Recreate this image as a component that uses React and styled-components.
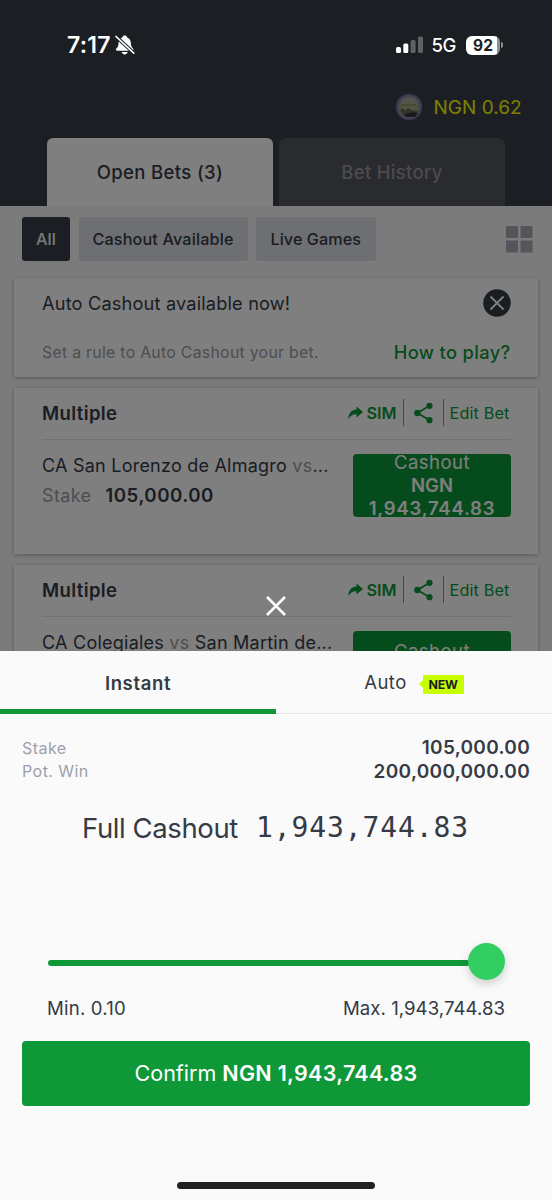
import React from "react";
import styled, { createGlobalStyle } from "styled-components";

const GlobalStyle = createGlobalStyle`
  *, *::before, *::after { box-sizing: border-box; }
  body { margin: 0; background: #7d7d7d; }
  button { font: inherit; border: 0; padding: 0; background: none; color: inherit; letter-spacing: inherit; }
`;

const Screen = styled.div`
  position: relative;
  width: 552px;
  height: 1200px;
  overflow: hidden;
  font-family: Inter, "Liberation Sans", sans-serif;
  color: #353a45;
  background: #f7f7f7;
  white-space: nowrap;
`;

const Header = styled.header`
  height: 206px;
  background: #373c46;
  display: flex;
  flex-direction: column;
  justify-content: flex-end;
`;

const Balance = styled.div`
  height: 28px;
  margin-bottom: 16.5px;
  padding-right: 30.5px;
  display: flex;
  align-items: center;
  justify-content: flex-end;
  gap: 10px;
  color: #ffff00;
  font-size: 19px;
  font-weight: 400;
  letter-spacing: 0px;
`;

const HeaderTabs = styled.nav`
  display: flex;
  gap: 6px;
  padding: 0 47px;
`;

const HeaderTab = styled.button`
  flex: 1;
  height: 68.5px;
  border-radius: 6px 6px 0 0;
  background: ${(p) => (p.$active ? "#fff" : "#54565e")};
  color: ${(p) => (p.$active ? "#353a45" : "#96979c")};
  font-size: 18.5px;
  font-weight: 500;
  letter-spacing: ${(p) => p.$track}px;
`;

const Filters = styled.div`
  display: flex;
  align-items: center;
  gap: 8.5px;
  padding: 11px 19.5px 0 22px;
`;

const Chip = styled.button`
  height: 44px;
  width: ${(p) => p.$width}px;
  border-radius: 3px;
  background: ${(p) => (p.$active ? "#373c46" : "#dddfe5")};
  color: ${(p) => (p.$active ? "#f4f4f4" : "#353a45")};
  font-size: 16.2px;
  font-weight: 500;
  letter-spacing: ${(p) => p.$track}px;
`;

const GridIcon = styled.svg`
  margin-left: auto;
`;

const CardList = styled.main`
  display: flex;
  flex-direction: column;
  gap: 11px;
  padding: 17px 14px 0;
`;

const Card = styled.section`
  height: ${(p) => p.$height}px;
  padding: 0 27px 0 28px;
  background: #fff;
  box-shadow: 0 1px 4px rgba(0, 0, 0, 0.3);
`;

const NoticeRow = styled.div`
  display: flex;
  align-items: center;
  justify-content: space-between;
  height: ${(p) => p.$height}px;
`;

const NoticeTitle = styled.span`
  font-size: 18.2px;
  letter-spacing: 0.17px;
`;

const NoticeHint = styled.span`
  font-size: 15.8px;
  letter-spacing: 0.3px;
  color: #9a9ba3;
`;

const GreenLink = styled.a`
  font-size: 18.3px;
  font-weight: 500;
  color: #0d9737;
  letter-spacing: 0.35px;
  padding-right: 0.5px;
`;

const CardHead = styled.div`
  height: 52px;
  padding-bottom: 2px;
  display: flex;
  align-items: center;
  border-bottom: 1px solid #e2e3e6;
`;

const CardTitle = styled.h2`
  margin: 0 auto 0 0;
  font-size: 18.5px;
  font-weight: 600;
  letter-spacing: 0.4px;
`;

const CardAction = styled.div`
  height: 27px;
  display: flex;
  align-items: center;
  color: #0d9737;
  font-size: 16.3px;
  font-weight: ${(p) => (p.$bold ? 600 : 400)};
  letter-spacing: ${(p) => p.$track || 0}px;
  gap: 3px;
  padding: ${(p) => p.$pad};
  border-left: ${(p) => (p.$divided ? "1.5px solid #8a8c94" : "0")};
`;

const CardBody = styled.div`
  display: flex;
  justify-content: space-between;
  padding-top: 14px;
`;

const BetInfo = styled.div`
  display: flex;
  flex-direction: column;
  font-size: 18px;
  line-height: 30px;
  margin-top: -3px;
  letter-spacing: ${(p) => p.$track}px;
`;

const Muted = styled.span`
  color: #9a9ba3;
`;

const StakeLine = styled.div`
  display: flex;
  gap: 14px;
  letter-spacing: 0.35px;
`;

const Strong = styled.strong`
  font-weight: 600;
  letter-spacing: ${(p) => p.$track || 0}px;
`;

const StakeAmount = styled(Strong)`
  font-size: 18.7px;
`;

const CashoutButton = styled.button`
  width: 158px;
  height: 63px;
  border-radius: 4px;
  overflow: hidden;
  background: #0d9737;
  color: #fff;
  display: flex;
  flex-direction: column;
  align-items: center;
  justify-content: center;
  font-size: 18.5px;
  line-height: 23px;
  letter-spacing: 0.5px;
`;

const Overlay = styled.div`
  position: absolute;
  inset: 0;
  background: rgba(0, 0, 0, 0.5);
`;

const StatusBar = styled.div`
  position: absolute;
  top: 31px;
  left: 0;
  right: 0;
  height: 28px;
  padding: 0 49px 0 67px;
  display: flex;
  align-items: center;
  color: #fff;
`;

const Clock = styled.span`
  font-size: 23px;
  font-weight: 600;
  letter-spacing: 0.2px;
  margin-right: 4.5px;
`;

const Network = styled.span`
  font-size: 18.5px;
  font-weight: 500;
  margin: 0 10px 0 9px;
  letter-spacing: -0.4px;
`;

const SignalIcon = styled.svg`
  margin-left: auto;
`;

const Battery = styled.span`
  width: 34px;
  height: 19px;
  border-radius: 6px;
  background: linear-gradient(90deg, #fff 92%, #8d8f92 92%);
  color: #1b1e23;
  font-size: 15.5px;
  font-weight: 700;
  line-height: 19px;
  text-align: center;
  margin-right: 1px;
`;

const BatteryTip = styled.i`
  width: 2px;
  height: 6px;
  border-radius: 0 2px 2px 0;
  background: #8d8f92;
`;

const CloseIcon = styled.svg`
  position: absolute;
  left: 266px;
  top: 595.5px;
`;

const Sheet = styled.section`
  position: absolute;
  top: 651px;
  left: 0;
  right: 0;
  bottom: 0;
  background: #fafafa;
  display: flex;
  flex-direction: column;
`;

const SheetTabs = styled.div`
  display: flex;
  height: 63px;
`;

const SheetTab = styled.button`
  flex: 1;
  display: flex;
  align-items: center;
  justify-content: center;
  gap: 12px;
  padding-top: ${(p) => (p.$active ? 5 : 0.5)}px;
  border-bottom: ${(p) => (p.$active ? "5.5px solid #0f9838" : "1px solid #e2e4ea")};
  font-size: 18.5px;
  font-weight: ${(p) => (p.$active ? 600 : 400)};
  letter-spacing: ${(p) => (p.$active ? 0.65 : 0.4)}px;
`;

const NewBadge = styled.span`
  display: flex;
  align-items: center;
  margin-top: 4px;
  &::before {
    content: "";
    border: 4px solid transparent;
    border-left: 0;
    border-right-color: #c8ff00;
  }
`;

const BadgeLabel = styled.span`
  width: 41px;
  height: 19px;
  line-height: 19px;
  text-align: center;
  background: #c8ff00;
  color: #1b1e23;
  border-radius: 1px;
  font-size: 12.4px;
  font-weight: 700;
  letter-spacing: -0.2px;
`;

const Summary = styled.dl`
  margin: 22px 22px 0;
`;

const SummaryRow = styled.div`
  display: flex;
  justify-content: space-between;
  align-items: center;
  height: 23.5px;
`;

const SummaryLabel = styled.dt`
  font-size: 16px;
  letter-spacing: 0.45px;
  color: #9ca0ab;
`;

const SummaryValue = styled.dd`
  margin: 0;
  font-size: 19px;
  font-weight: 600;
  letter-spacing: 0.3px;
`;

const Total = styled.div`
  margin-top: 24.5px;
  height: 40px;
  padding-left: 82px;
  display: flex;
  align-items: center;
  gap: 18px;
  font-size: 27.5px;
  letter-spacing: -0.4px;
`;

const MonoAmount = styled.span`
  font-family: "DejaVu Sans Mono", "Liberation Mono", monospace;
  font-size: 28px;
  letter-spacing: 0.9px;
`;

const Slider = styled.div`
  margin: 95.5px 47px 0 48px;
  height: 37px;
  display: flex;
  align-items: center;
`;

const Track = styled.div`
  flex: 1;
  height: 5.5px;
  margin: 3px -2px 0 0;
  border-radius: 3px;
  background: #0f9838;
`;

const Thumb = styled.div`
  width: 37px;
  height: 37px;
  border-radius: 50%;
  background: #32ce61;
  box-shadow: 0 4px 10px rgba(0, 0, 0, 0.18);
`;

const Range = styled.div`
  margin: 14.5px 47px 0;
  height: 26px;
  display: flex;
  justify-content: space-between;
  align-items: center;
  font-size: 18.6px;
`;

const RangeText = styled.span`
  letter-spacing: ${(p) => p.$track}px;
`;

const Confirm = styled.button`
  margin: 20px 22px 0;
  height: 65.5px;
  border-radius: 4px;
  background: #0f9838;
  color: #fff;
  font-size: 21.5px;
  letter-spacing: 0;
`;

const HomeIndicator = styled.div`
  width: 198px;
  height: 7px;
  margin: auto auto 11px;
  border-radius: 4px;
  background: #222;
`;

const Avatar = () => (
  <svg width="28" height="28" viewBox="0 0 28 28">
    <circle cx="14" cy="14" r="13.5" fill="#66608f" />
    <circle cx="14" cy="14" r="12" fill="#8b88a4" />
    <circle cx="14" cy="14" r="9.6" fill="#a1a983" />
    <path d="M7 6.500Q14 2.500 21 6.500L20 10H7Z" fill="#aaa99a" />
    <path d="M5 17 8 15 10 18 13 15 16 17 23 18 20 22Q14 25 8 22Z" fill="#66624f" />
    <path d="M9 22Q15 18 23 20L20 24H11Z" fill="#31333a" />
    <path d="M6 12H21M7 16L12 19" stroke="#78754f" strokeWidth="1" />
  </svg>
);

const BellOff = () => (
  <svg width="20" height="20" viewBox="0 0 20 20">
    <path d="M9.700 0.500C10.900 0.500 11.700 1.200 11.900 2.200C14.500 3.100 15.700 5.200 15.800 7.800C15.900 11 16.600 12.200 18 13.500C18.900 14.400 18.400 15.800 17.100 15.800H2.300C1 15.800 0.500 14.400 1.400 13.500C2.800 12.200 3.500 11 3.600 7.800C3.700 5.200 4.900 3.100 7.500 2.200C7.700 1.200 8.500 0.500 9.700 0.500Z" fill="#fff" />
    <path d="M6.700 17H12.700C12.300 18.600 11.200 19.400 9.700 19.400S7.100 18.600 6.700 17Z" fill="#fff" />
    <path d="M0.500 1 19 18.300" stroke="#1b1e23" strokeWidth="3.600" />
    <path d="M1 1.500 18.800 18.200" stroke="#fff" strokeWidth="1.700" strokeLinecap="round" />
  </svg>
);

const ForwardIcon = () => (
  <svg width="15" height="14" viewBox="0 0 15 14">
    <path d="M8.500 0.500 15 6 8.500 11.500V8.300C4.700 8.200 2.300 9.700 0.400 13.200C0.300 8 3 4 8.500 3.600Z" fill="#0d9737" />
  </svg>
);

const ShareIcon = () => (
  <svg width="19" height="22" viewBox="0 0 19 22">
    <path d="M15.500 3.800 3.500 11 15.500 18.200" fill="none" stroke="#0d9737" strokeWidth="1.800" />
    <circle cx="15.500" cy="3.800" r="3.100" fill="#0d9737" />
    <circle cx="3.400" cy="11" r="3.200" fill="#0d9737" />
    <circle cx="15.500" cy="18.200" r="3.100" fill="#0d9737" />
  </svg>
);

function BetCard({ children, track, amount }) {
  return (
    <Card $height={166}>
      <CardHead>
        <CardTitle>Multiple</CardTitle>
        <CardAction $bold $pad="0 6.5px 0 0">
          <ForwardIcon />
          SIM
        </CardAction>
        <CardAction $divided $pad="0 10px 0 10px">
          <ShareIcon />
        </CardAction>
        <CardAction $divided $pad="0 1.5px 0 5.5px" $track={0.1}>
          Edit Bet
        </CardAction>
      </CardHead>
      <CardBody>
        <BetInfo $track={track}>
          <div>{children}</div>
          <StakeLine>
            <Muted>Stake</Muted>
            <StakeAmount $track={0.5}>105,000.00</StakeAmount>
          </StakeLine>
        </BetInfo>
        <CashoutButton>
          <span>Cashout</span>
          <Strong>NGN</Strong>
          {amount && <Strong $track={0.78}>{amount}</Strong>}
        </CashoutButton>
      </CardBody>
    </Card>
  );
}

export default function App() {
  return (
    <Screen>
      <GlobalStyle />
      <Header>
        <Balance>
          <Avatar />
          NGN 0.62
        </Balance>
        <HeaderTabs>
          <HeaderTab $active $track={0.35}>Open Bets (3)</HeaderTab>
          <HeaderTab $track={0.3}>Bet History</HeaderTab>
        </HeaderTabs>
      </Header>
      <Filters>
        <Chip $active $width={48} $track={0.2}>All</Chip>
        <Chip $width={169} $track={0.15}>Cashout Available</Chip>
        <Chip $width={119.5} $track={0.05}>Live Games</Chip>
        <GridIcon width="27" height="27" viewBox="0 0 27 27" fill="#a8aab4">
          <rect width="12" height="12" />
          <rect x="14.500" width="12" height="12" />
          <rect y="14.500" width="12" height="12" />
          <rect x="14.500" y="14.500" width="12" height="12" />
        </GridIcon>
      </Filters>
      <CardList>
        <Card $height={99}>
          <NoticeRow $height={49}>
            <NoticeTitle>Auto Cashout available now!</NoticeTitle>
            <svg width="28" height="28" viewBox="0 0 28 28">
              <circle cx="14" cy="14" r="13.800" fill="#353a45" />
              <path d="M7.500 7.500 20.500 20.500M20.500 7.500 7.500 20.500" stroke="#fff" strokeWidth="1.800" />
            </svg>
          </NoticeRow>
          <NoticeRow $height={50}>
            <NoticeHint>Set a rule to Auto Cashout your bet.</NoticeHint>
            <GreenLink>How to play?</GreenLink>
          </NoticeRow>
        </Card>
        <BetCard track={0.23} amount="1,943,744.83">
          CA San Lorenzo de Almagro <Muted>vs</Muted>...
        </BetCard>
        <BetCard track={0.24}>
          CA Colegiales <Muted>vs</Muted> San Martin de...
        </BetCard>
      </CardList>
      <Overlay />
      <StatusBar>
        <Clock>7:17</Clock>
        <BellOff />
        <SignalIcon width="27" height="18" viewBox="0 0 27 18" fill="#fff">
          <rect y="11" width="5" height="6" rx="1.500" />
          <rect x="7.300" y="7.500" width="5" height="9.500" rx="1.500" />
          <rect x="14.600" y="4" width="5" height="13" rx="1.500" opacity="0.300" />
          <rect x="22" y="0.500" width="5" height="16.500" rx="1.500" opacity="0.300" />
        </SignalIcon>
        <Network>5G</Network>
        <Battery>92</Battery>
        <BatteryTip />
      </StatusBar>
      <CloseIcon width="20" height="20" viewBox="0 0 20 20">
        <path d="M1 1 19 19M19 1 1 19" stroke="#fff" strokeWidth="2.500" />
      </CloseIcon>
      <Sheet>
        <SheetTabs>
          <SheetTab $active>Instant</SheetTab>
          <SheetTab>
            Auto
            <NewBadge>
              <BadgeLabel>NEW</BadgeLabel>
            </NewBadge>
          </SheetTab>
        </SheetTabs>
        <Summary>
          <SummaryRow>
            <SummaryLabel>Stake</SummaryLabel>
            <SummaryValue>105,000.00</SummaryValue>
          </SummaryRow>
          <SummaryRow>
            <SummaryLabel>Pot. Win</SummaryLabel>
            <SummaryValue>200,000,000.00</SummaryValue>
          </SummaryRow>
        </Summary>
        <Total>
          Full Cashout
          <MonoAmount>1,943,744.83</MonoAmount>
        </Total>
        <Slider>
          <Track />
          <Thumb />
        </Slider>
        <Range>
          <RangeText $track={0.2}>Min. 0.10</RangeText>
          <RangeText $track={0.05}>Max. 1,943,744.83</RangeText>
        </Range>
        <Confirm>
          Confirm <Strong $track={0.3}>NGN 1,943,744.83</Strong>
        </Confirm>
        <HomeIndicator />
      </Sheet>
    </Screen>
  );
}
